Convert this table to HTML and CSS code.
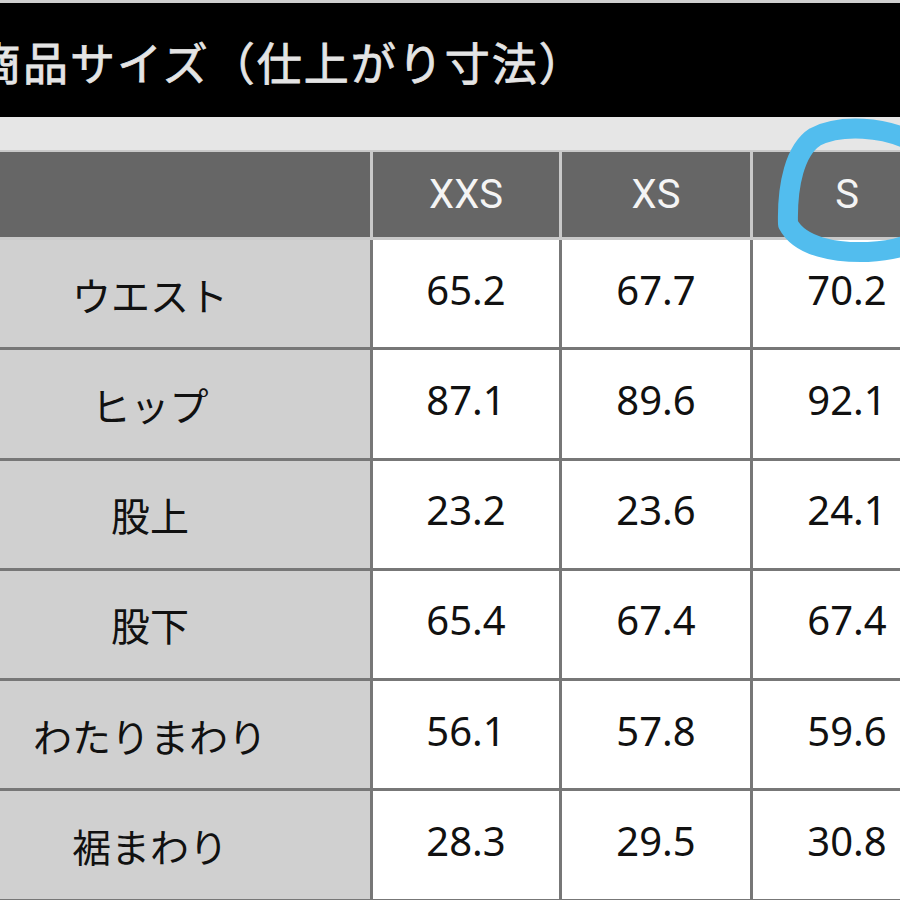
FILE: index.html
```html
<!DOCTYPE html>
<html lang="ja">
<head>
<meta charset="utf-8">
<title>商品サイズ</title>
<link rel="stylesheet" href="styles.css">
</head>
<body>
<div class="page">
  <div class="topline"></div>
  <div class="titlebar"><h1 class="title">商品サイズ（仕上がり寸法）</h1></div>
  <div class="strip"></div>
  <div class="sizetable">
    <div class="thead">
      <div class="th"></div>
      <div class="th">XXS</div>
      <div class="th">XS</div>
      <div class="th">S</div>
    </div>
    <div class="tbody">
      <div class="label">ウエスト</div><div class="num">65.2</div><div class="num">67.7</div><div class="num">70.2</div>
      <div class="label">ヒップ</div><div class="num">87.1</div><div class="num">89.6</div><div class="num">92.1</div>
      <div class="label">股上</div><div class="num">23.2</div><div class="num">23.6</div><div class="num">24.1</div>
      <div class="label">股下</div><div class="num">65.4</div><div class="num">67.4</div><div class="num">67.4</div>
      <div class="label">わたりまわり</div><div class="num">56.1</div><div class="num">57.8</div><div class="num">59.6</div>
      <div class="label">裾まわり</div><div class="num">28.3</div><div class="num">29.5</div><div class="num">30.8</div>
    </div>
  </div>
</div>
<svg class="marker" width="900" height="900" viewBox="0 0 900 900" xmlns="http://www.w3.org/2000/svg">
  <path d="M915 143 C885 126 840 124 815 137 C795 150 787 185 788 224 C800 247 835 253 868 252 C888 251 905 247 915 241" fill="none" stroke="#52bdee" stroke-width="20" stroke-linecap="round" stroke-linejoin="round"/>
</svg>
</body>
</html>
```
FILE: styles.css
```css
html, body {
  margin: 0;
  padding: 0;
}
body {
  width: 900px;
  height: 900px;
  overflow: hidden;
  background: #e6e6e6;
  font-family: "Noto Sans CJK JP", "Noto Sans", sans-serif;
  position: relative;
}
.page {
  display: flex;
  flex-direction: column;
}
.topline {
  height: 3px;
  background: #cfcfcf;
}
.titlebar {
  height: 114px;
  background: #000;
  display: flex;
  align-items: center;
  overflow: hidden;
}
.title {
  margin: 0 0 0 -24px;
  font-family: "Noto Sans CJK JP", sans-serif;
  font-size: 45px;
  font-weight: 400;
  -webkit-text-stroke: 0.8px #e4e4e4;
  letter-spacing: 2px;
  color: #e4e4e4;
  white-space: nowrap;
  line-height: 1;
  padding-top: 2px;
}
.strip {
  height: 33px;
  background: #e6e6e6;
}
.sizetable {
  margin-left: -70px;
  width: 1011px;
}
.thead {
  display: grid;
  grid-template-columns: 440px 186px 188px 188px;
  column-gap: 3px;
  background: #c9c9c9;
  padding: 2px 0 3px;
}
.th {
  height: 85px;
  background: #666;
  color: #f4f4f4;
  font-family: Roboto, "Noto Sans", sans-serif;
  font-size: 40px;
  display: flex;
  align-items: center;
  justify-content: center;
}
.tbody {
  display: grid;
  grid-template-columns: 440px 186px 188px 188px;
  grid-auto-rows: 107.25px;
  gap: 3px;
  background: #777;
  padding-bottom: 3px;
}
.label {
  background: #d0d0d0;
  color: #111;
  font-family: "Noto Sans CJK JP", sans-serif;
  font-size: 39px;
  display: flex;
  align-items: center;
  justify-content: center;
}
.num {
  background: #fff;
  color: #111;
  font-family: "Noto Sans", "Open Sans", sans-serif;
  font-size: 40px;
  display: flex;
  align-items: center;
  justify-content: center;
  padding-bottom: 9px;
  box-sizing: border-box;
}
.marker {
  position: absolute;
  top: 0;
  left: 0;
  pointer-events: none;
}
```
